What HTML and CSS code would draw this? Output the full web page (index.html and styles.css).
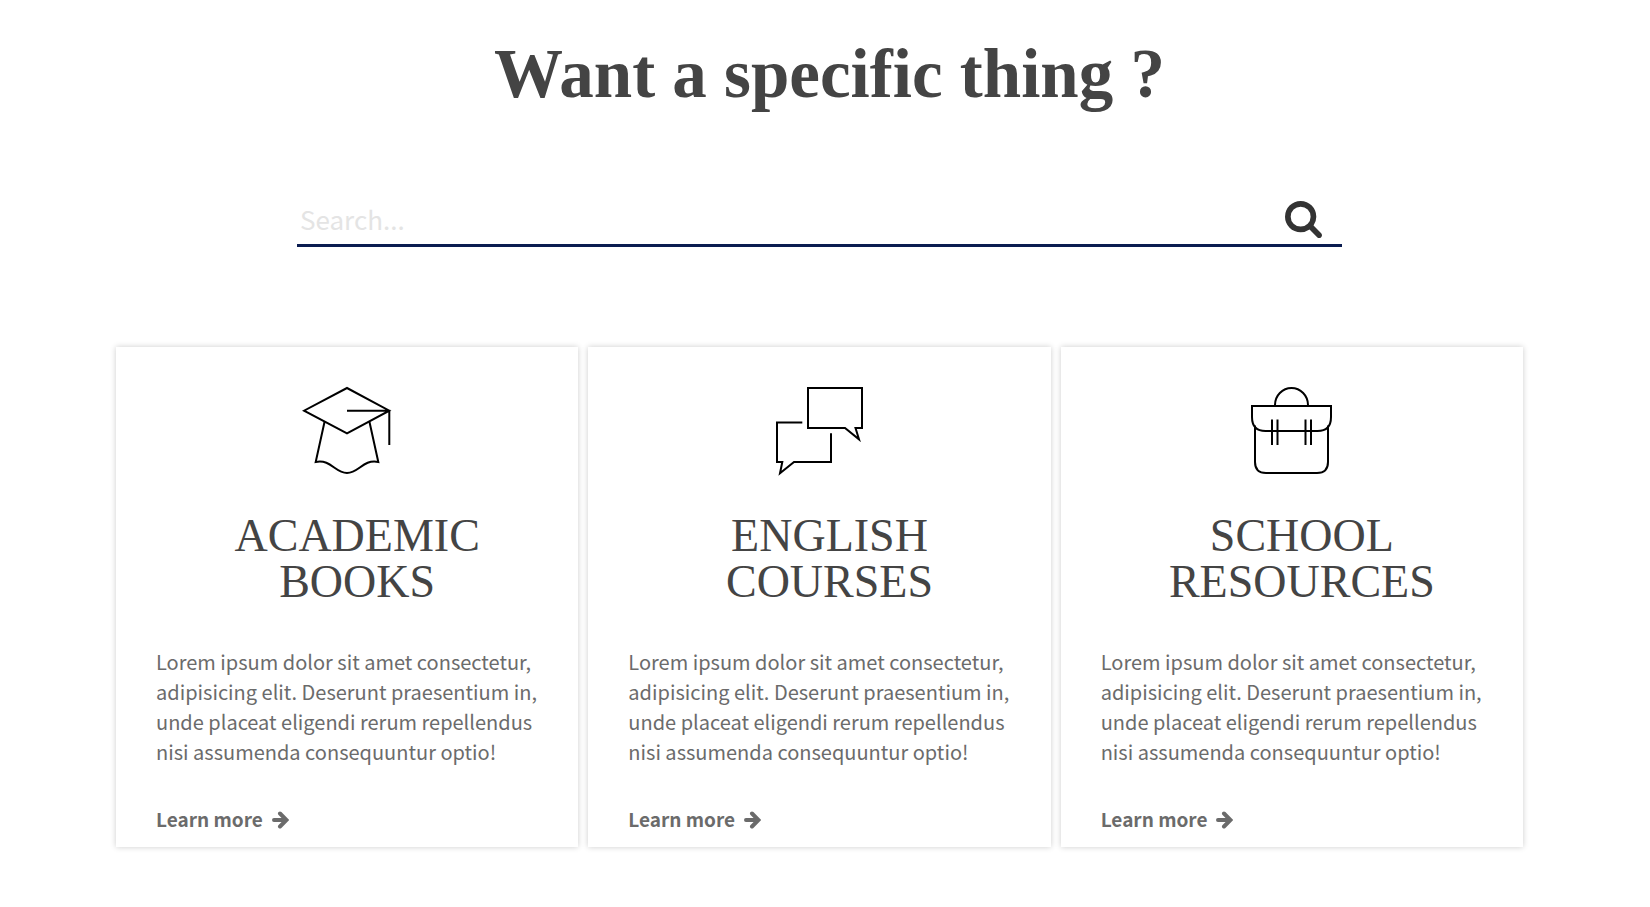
FILE: index.html
```html
<!DOCTYPE html>
<html lang="en">
<head>
<meta charset="utf-8">
<meta name="viewport" content="width=device-width, initial-scale=1">
<title>Want a specific thing ?</title>
<link rel="stylesheet" href="styles.css">
</head>
<body>
<main class="page">
  <h1 class="page-title">Want a specific thing ?</h1>

  <form class="search">
    <input class="search-input" type="text" placeholder="Search..." aria-label="Search">
    <button class="search-button" type="button" aria-label="Submit search">
      <svg class="search-icon" viewBox="64 128 1664 1664" aria-hidden="true"><path d="M1216 832q0-185-131.500-316.500t-316.500-131.500-316.500 131.500-131.500 316.500 131.500 316.500 316.500 131.500 316.500-131.500 131.500-316.500zm512 832q0 52-38 90t-90 38q-54 0-90-38l-343-342q-179 124-399 124-143 0-273.500-55.500t-225-150-150-225-55.500-273.500 55.500-273.500 150-225 225-150 273.500-55.500 273.500 55.500 225 150 150 225 55.500 273.500q0 220-124 399l343 343q37 37 37 90z"/></svg>
    </button>
  </form>

  <section class="cards">
    <article class="card">
      <svg class="card-icon" viewBox="0 0 90 90" aria-hidden="true">
        <path d="M45 2 87.300 24.700 45 47.300 2 24.700ZM45 24.700H87.300V59"/>
        <path d="M22.500 36 13.700 76C29 73 33 87 45 87S61 73 76.300 76L67.500 36"/>
      </svg>
      <h2 class="card-title">ACADEMIC BOOKS</h2>
      <p class="card-text">Lorem ipsum dolor sit amet consectetur, adipisicing elit. Deserunt praesentium in, unde placeat eligendi rerum repellendus nisi assumenda consequuntur optio!</p>
      <a class="card-link" href="#">Learn more
        <svg class="arrow" viewBox="0 0 17 20" aria-hidden="true"><path d="M2 11H13M8 4.500 14.500 11 8 17.500"/></svg>
      </a>
    </article>

    <article class="card">
      <svg class="card-icon" viewBox="0 0 90 90" aria-hidden="true">
        <path d="M34 2H88V42H81.500L85 53.300 71 42H34Z"/>
        <path d="M28.300 36.500H3V76H8.300L6 87.300 20 76H57V47.300"/>
      </svg>
      <h2 class="card-title">ENGLISH COURSES</h2>
      <p class="card-text">Lorem ipsum dolor sit amet consectetur, adipisicing elit. Deserunt praesentium in, unde placeat eligendi rerum repellendus nisi assumenda consequuntur optio!</p>
      <a class="card-link" href="#">Learn more
        <svg class="arrow" viewBox="0 0 17 20" aria-hidden="true"><path d="M2 11H13M8 4.500 14.500 11 8 17.500"/></svg>
      </a>
    </article>

    <article class="card">
      <svg class="card-icon" viewBox="0 0 90 90" aria-hidden="true">
        <path d="M28 20V19A16.500 17 0 0 1 61 19V20"/>
        <path d="M5 20H84V31Q84 45 70.500 45H18.500Q5 45 5 31Z"/>
        <path d="M8 39.500V76Q8 87 19 87H70Q81 87 81 76V39.500"/>
        <path d="M25 33.500V59M30.500 33.500V59M58.500 33.500V59M64 33.500V59"/>
      </svg>
      <h2 class="card-title">SCHOOL RESOURCES</h2>
      <p class="card-text">Lorem ipsum dolor sit amet consectetur, adipisicing elit. Deserunt praesentium in, unde placeat eligendi rerum repellendus nisi assumenda consequuntur optio!</p>
      <a class="card-link" href="#">Learn more
        <svg class="arrow" viewBox="0 0 17 20" aria-hidden="true"><path d="M2 11H13M8 4.500 14.500 11 8 17.500"/></svg>
      </a>
    </article>
  </section>
</main>
</body>
</html>
```
FILE: styles.css
```css
* {
  box-sizing: border-box;
}

body {
  margin: 0;
  background: #fff;
  color: #6b6b6b;
  font-family: "Noto Sans CJK SC", "Open Sans", sans-serif;
}

.page {
  padding: 34px 127px 60px 116px;
}

.page-title,
.card-title {
  margin: 0;
  padding-left: 20px;
  color: #444;
  font-family: "Liberation Serif", serif;
  text-align: center;
}

.page-title {
  font-size: 69px;
  font-weight: 700;
  line-height: 80px;
}

.search {
  display: flex;
  align-items: center;
  margin: 80px 181px 100px;
  padding-right: 20px;
  border-bottom: 3px solid #0a1c50;
}

.search-input {
  flex: 1;
  min-width: 0;
  height: 50px;
  padding: 0 3px 2px;
  border: 0;
  outline: 0;
  background: transparent;
  color: #444;
  font: 26px "Noto Sans CJK SC", sans-serif;
}

.search-input::placeholder {
  color: #e4e4e4;
  opacity: 1;
}

.search-button {
  display: flex;
  padding: 0;
  border: 0;
  background: none;
  cursor: pointer;
}

.search-icon {
  width: 37px;
  height: 37px;
  fill: #333;
}

.cards {
  display: grid;
  grid-template-columns: repeat(3, 1fr);
  gap: 10px;
}

.card {
  display: flex;
  flex-direction: column;
  padding: 39px 40px 12px;
  background: #fff;
  box-shadow: 0 0 6px rgba(0, 0, 0, 0.2);
}

.card-icon {
  align-self: center;
  width: 90px;
  height: 90px;
  fill: none;
  stroke: #000;
  stroke-width: 2;
}

.card-title {
  margin: 37px 40px 42px;
  font-size: 46px;
  font-weight: 400;
  line-height: 46px;
}

.card-text {
  margin: 0 0 36px;
  font-size: 20px;
  line-height: 30px;
}

.card-link {
  display: flex;
  align-items: center;
  gap: 9px;
  align-self: flex-start;
  color: #6b6b6b;
  font-size: 19px;
  font-weight: 700;
  line-height: 32px;
  text-decoration: none;
}

.arrow {
  width: 17px;
  height: 20px;
  fill: none;
  stroke: #6b6b6b;
  stroke-width: 4;
  stroke-linecap: round;
}
```
